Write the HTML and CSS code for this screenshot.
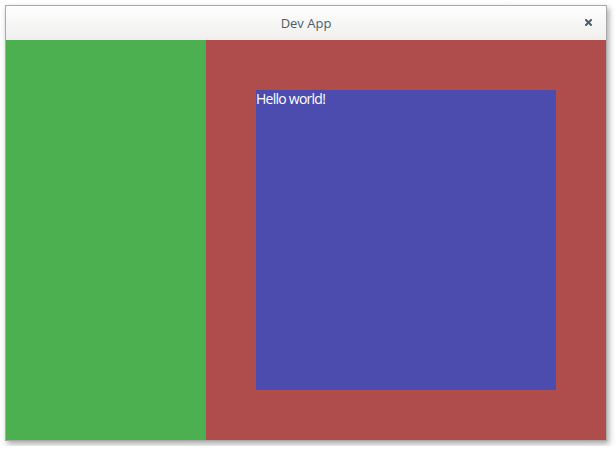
FILE: index.html
```html
<!DOCTYPE html>
<html>
<head>
<meta charset="utf-8">
<link rel="stylesheet" href="styles.css">
</head>
<body>
<div class="window">
  <div class="titlebar">
    <span class="title">Dev App</span>
    <svg class="close" width="7" height="7" viewBox="0 0 7 7"><path d="M1 1 L6 6 M6 1 L1 6" stroke="#4f5d68" stroke-width="2" stroke-linecap="square"/></svg>
  </div>
  <div class="content">
    <div class="left"></div>
    <div class="right">
      <div class="box">Hello world!</div>
    </div>
  </div>
</div>
</body>
</html>
```
FILE: styles.css
```css
html, body { margin: 0; padding: 0; background: #ffffff; }
body { padding: 5px; }
.window {
  width: 600px;
  border: 1px solid #a9a9a9;
  box-shadow: 2px 3px 6px rgba(0,0,0,0.35);
  display: flex;
  flex-direction: column;
}
.titlebar {
  height: 34px;
  background: linear-gradient(#fefefe, #f0efee);
  display: flex;
  align-items: center;
  justify-content: center;
  position: relative;
}
.title {
  font-family: "Open Sans", sans-serif;
  font-size: 13px;
  color: #4d5c6b;
}
.close { position: absolute; right: 14px; top: 13px; }
.content { display: flex; height: 400px; }
.left { width: 200px; background: #4caf50; }
.right { flex: 1; background: #af4c4c; padding: 50px; }
.box {
  width: 300px; height: 300px; background: #4c4caf;
  color: #ffffff;
  font-family: "Open Sans", sans-serif;
  font-size: 14px;
  line-height: 18px;
  letter-spacing: -0.75px;
}
```
